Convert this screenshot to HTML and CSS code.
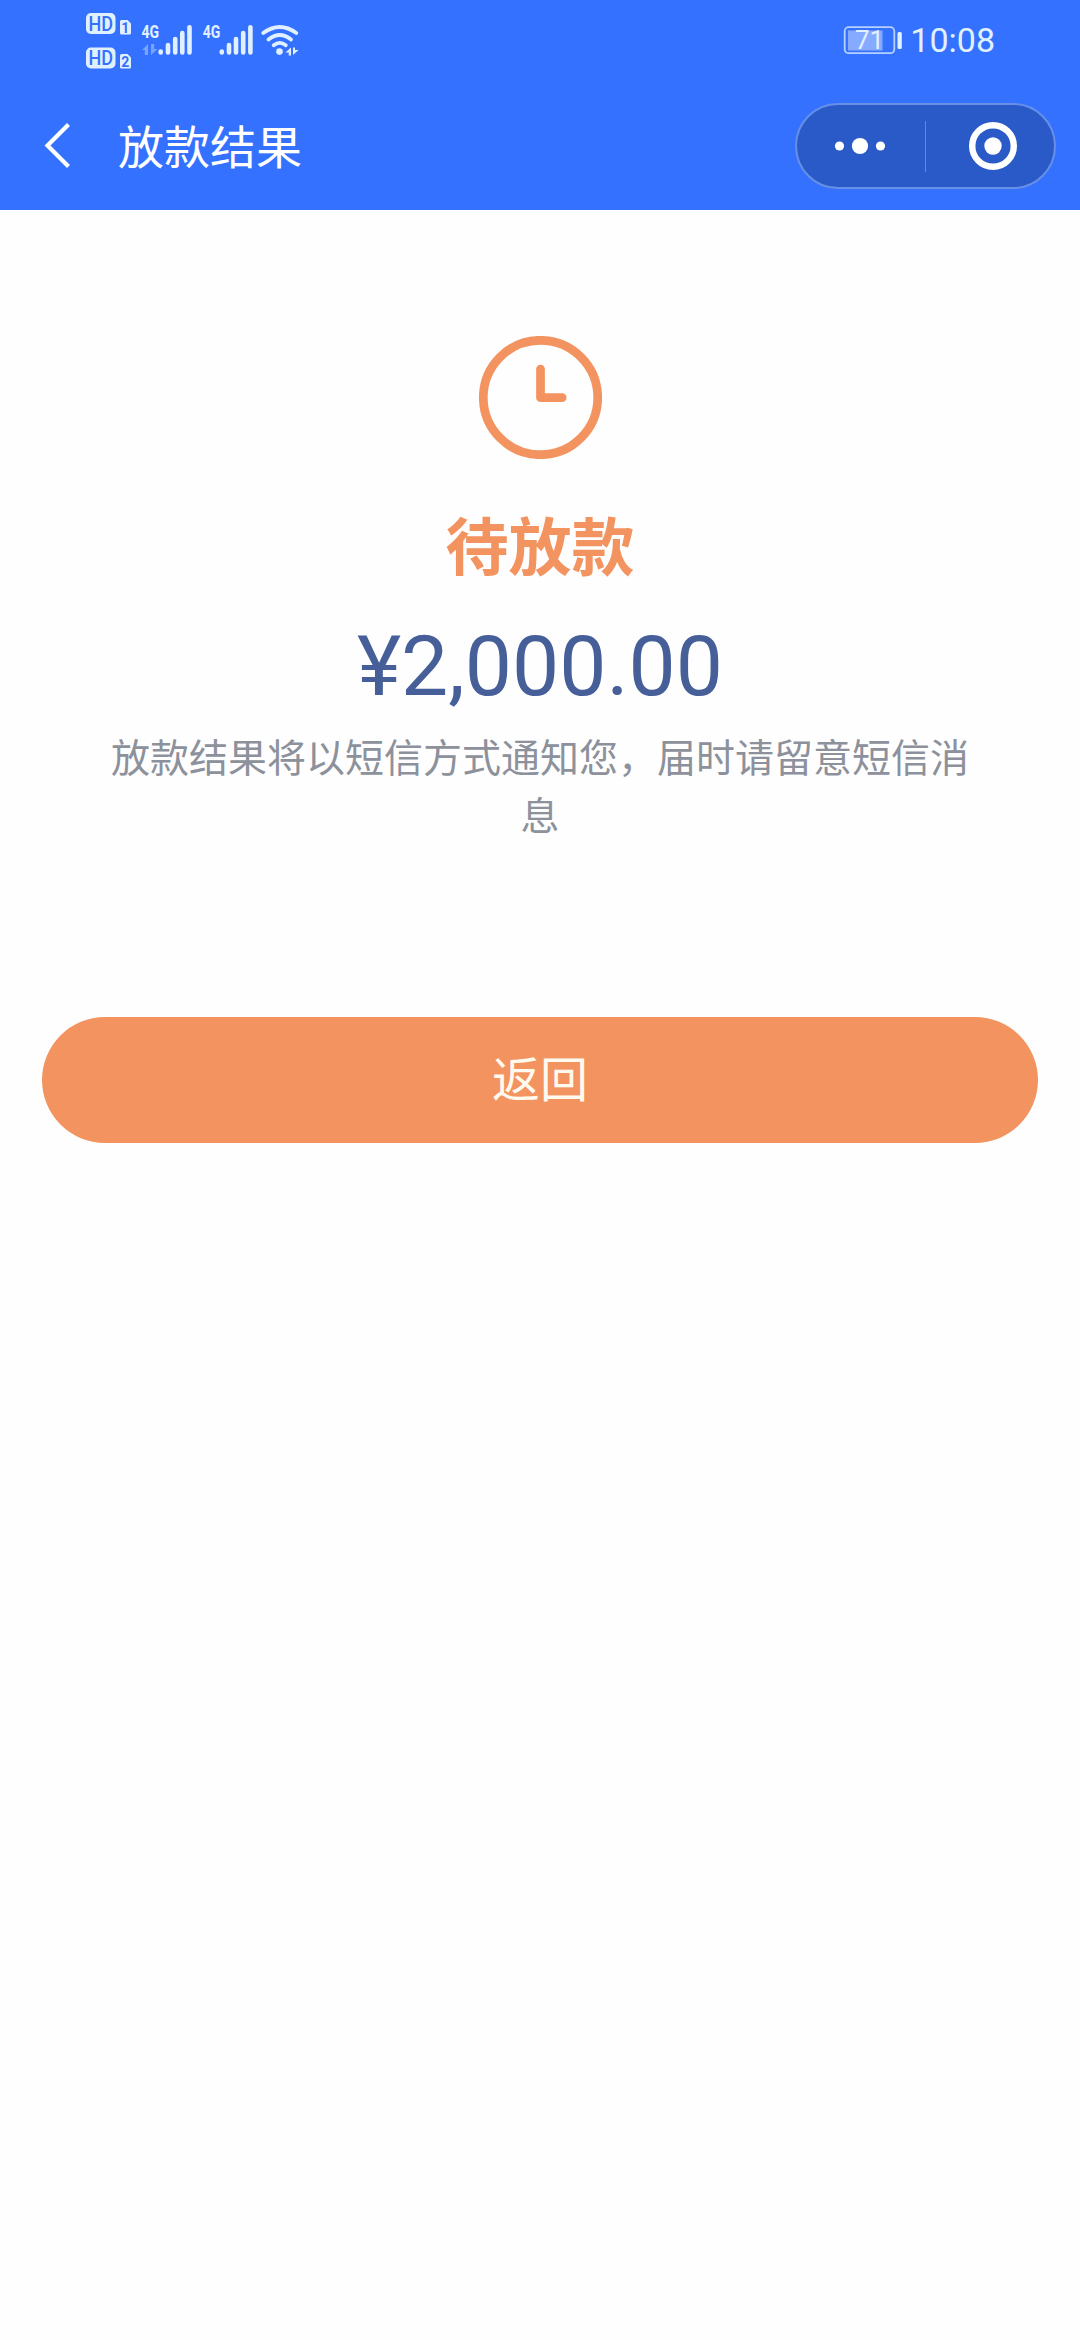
FILE: index.html
```html
<!DOCTYPE html>
<html lang="zh-CN">
<head>
<meta charset="utf-8">
<title>放款结果</title>
<link rel="stylesheet" href="styles.css">
</head>
<body>
<header class="header">
  <div class="status">
    <svg class="status-icon" width="50" height="80" viewBox="84 0 50 80">
      <rect class="ink" x="86" y="13" width="29.500" height="21" rx="5"/>
      <text class="hd" x="88.500" y="30.700" textLength="24.500" lengthAdjust="spacingAndGlyphs">HD</text>
      <path class="ink" d="M121.500 20h6l3.500 3.500v9.500q0 1.500-1.500 1.500h-8q-1.500 0-1.500-1.500v-11.500q0-1.500 1.500-1.500z"/>
      <text class="sim" x="125.300" y="32.500">1</text>
      <rect class="ink" x="86" y="47.500" width="29.500" height="21" rx="5"/>
      <text class="hd" x="88.500" y="65.200" textLength="24.500" lengthAdjust="spacingAndGlyphs">HD</text>
      <path class="ink" d="M121.500 54h6l3.500 3.500v9.500q0 1.500-1.500 1.500h-8q-1.500 0-1.500-1.500v-11.500q0-1.500 1.500-1.500z"/>
      <text class="sim" x="125.300" y="66.500">2</text>
    </svg>
    <svg class="status-icon" width="62" height="80" viewBox="134 0 62 80">
      <text class="net" transform="translate(141.500 38.300) scale(.8 1)">4G</text>
      <path class="ink dim" d="M142 50l6-6v11h-3.200v-5zM151 44h3.200v5h3.300l-6.500 6z"/>
      <path class="bars" d="M160.700 51.500v1M168 45v7.500M175.200 39v13.500M182.300 33v19.500M189.500 27.200v25.300"/>
    </svg>
    <svg class="status-icon" width="61" height="80" viewBox="196 0 61 80">
      <text class="net" transform="translate(202.700 38.300) scale(.8 1)">4G</text>
      <path class="bars" d="M221.800 51.500v1M229 45v7.500M236 39v13.500M243.200 33v19.500M250.400 27.200v25.300"/>
    </svg>
    <svg class="status-icon" width="46" height="80" viewBox="257 0 46 80">
      <path class="wave" d="M263.200 33Q279.800 21 296.300 33M268.500 39.500Q279.800 30.500 291 39.500M273.700 45.200Q279.800 40.500 285.800 45.200"/>
      <circle class="ink" cx="279.500" cy="51.600" r="3.300"/>
      <path class="ink" d="M285.500 52.500l5.500-5v8h-2.300v-3zM293 47.500h2v2.500l3.500 0-5.500 5z"/>
    </svg>
    <svg class="battery" width="62" height="80" viewBox="842 0 62 80">
      <rect class="cell" x="843.700" y="27.200" width="49.600" height="26" rx="4"/>
      <rect class="charge" x="847" y="30.500" width="34.500" height="20"/>
      <rect class="ink" x="896.500" y="32" width="4.300" height="17" rx="1.500"/>
      <text class="percent" x="854" y="49">71</text>
    </svg>
    <span class="time">10:08</span>
  </div>
  <div class="nav">
    <svg class="back" width="30" height="50" viewBox="43 121 30 50"><path d="M68.500 124.500L47.500 145.500 68.500 166.500"/></svg>
    <h1 class="title">放款结果</h1>
    <div class="capsule">
      <svg class="more" width="46" height="20" viewBox="0 0 46 20"><circle cx="2.500" cy="10" r="4.600"/><circle cx="23" cy="10" r="8.100"/><circle cx="43.500" cy="10" r="4.600"/></svg>
      <span class="divider"></span>
      <svg class="close" width="50" height="50" viewBox="0 0 50 50"><circle class="ring" cx="25" cy="25" r="20.800"/><circle class="ink-white" cx="25" cy="25" r="8.700"/></svg>
    </div>
  </div>
</header>
<main class="result">
  <svg class="clock" width="123" height="123" viewBox="0 0 123 123">
    <circle cx="61.500" cy="61.500" r="57.200"/>
    <path d="M61.500 33V61.700H83.200"/>
  </svg>
  <h2 class="state">待放款</h2>
  <p class="amount">¥2,000.00</p>
  <p class="note">放款结果将以短信方式通知您，届时请留意短信消息</p>
  <button class="button" type="button">返回</button>
</main>
</body>
</html>
```
FILE: styles.css
```css
* {
  box-sizing: border-box;
  margin: 0;
  padding: 0;
}

body {
  width: 1080px;
  min-height: 2340px;
  background: #fefefe;
  font-family: Roboto, "Noto Sans CJK SC", sans-serif;
}

.header {
  height: 210px;
  background: #3471ff;
  color: #fff;
}

.status {
  display: flex;
  align-items: center;
  height: 80px;
  padding: 0 85px 0 84px;
  color: #e1f0ff;
}

.status svg {
  flex: none;
}

.status-icon,
.battery {
  overflow: visible;
}

.ink {
  fill: #e1f0ff;
}

.dim {
  opacity: .4;
}

.hd,
.sim {
  fill: #3471ff;
  font-size: 20px;
  font-weight: 500;
}

.sim {
  font-size: 14px;
  font-weight: 700;
  text-anchor: middle;
}

.net {
  fill: #e1f0ff;
  font-size: 17.500px;
  font-weight: 700;
}

.bars,
.wave {
  fill: none;
  stroke: #e1f0ff;
  stroke-width: 4.600;
  stroke-linecap: round;
}

.wave {
  stroke-width: 3.800;
}

.battery {
  margin-left: auto;
}

.cell {
  fill: none;
  stroke: #b4d1ff;
  stroke-width: 1.800;
}

.charge {
  fill: #86aaff;
}

.percent {
  fill: #e1f0ff;
  font-size: 26px;
}

.time {
  margin-left: 5.500px;
  font-size: 34px;
  line-height: 82px;
}

.nav {
  display: flex;
  align-items: center;
  height: 130px;
  padding: 2px 24px 0 43px;
}

.back {
  fill: none;
  stroke: #fff;
  stroke-width: 4.200;
}

.title {
  margin-left: 45px;
  padding-top: 4px;
  font-size: 46px;
  font-weight: 400;
  line-height: 68px;
}

.capsule {
  display: flex;
  align-items: center;
  width: 261px;
  height: 86px;
  margin-left: auto;
  padding: 0 36px 0 40px;
  border: 2px solid #668fe6;
  border-radius: 43px;
  background: #2a5ac8;
}

.more {
  overflow: visible;
  fill: #fff;
}

.divider {
  width: 1px;
  height: 51px;
  margin: 0 42px;
  background: #6388dc;
}

.close {
  flex: none;
}

.ring {
  fill: none;
  stroke: #fff;
  stroke-width: 6.400;
}

.ink-white {
  fill: #fff;
}

.result {
  display: flex;
  flex-direction: column;
  align-items: center;
  padding: 126px 42px 0;
  text-align: center;
}

.clock {
  fill: none;
  stroke: #f3935f;
  stroke-width: 8.700;
  stroke-linecap: round;
  stroke-linejoin: round;
}

.state {
  margin-top: 43px;
  color: #f3935f;
  font-size: 63px;
  font-weight: 700;
  line-height: 94px;
}

.amount {
  margin-top: 21px;
  color: #465f99;
  font-size: 84px;
  line-height: 100px;
}

.note {
  width: 870px;
  margin-top: 13px;
  color: #8c919b;
  font-size: 39px;
  line-height: 58px;
}

.button {
  width: 996px;
  height: 126px;
  margin-top: 171px;
  padding-bottom: 9px;
  border: 0;
  border-radius: 63px;
  background: #f3935f;
  color: #fffaf0;
  font-family: inherit;
  font-size: 48px;
}
```
